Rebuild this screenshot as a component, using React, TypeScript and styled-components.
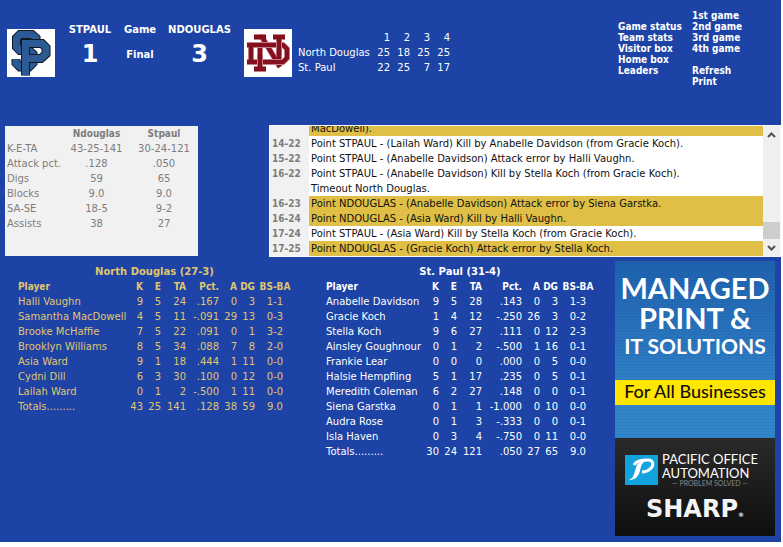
import React from "react";
import styled, { createGlobalStyle } from "styled-components";

const Global = createGlobalStyle`
  * { box-sizing: border-box; }
  html { background: #fff; }
  body { margin: 0; font-family: "DejaVu Sans", Verdana, sans-serif; font-size: 11px; line-height: 15px; color: #fff; }
  table { border-collapse: collapse; border-spacing: 0; }
  td, th { padding: 0; white-space: nowrap; }
`;

const Page = styled.main`
  margin: 0 2px 5px 0;
  padding-bottom: 6px;
  background: #1c43a5;
  overflow: hidden;
`;

const Header = styled.header`
  display: flex;
  align-items: flex-start;
  height: 125px;
  padding: 10px 41px 0 7px;
`;

const TeamLogo = styled.svg`
  display: block;
  flex: none;
  width: 48px;
  height: 48px;
  margin-top: 19px;
  background: #fff;
`;

const Scoreboard = styled.div`
  display: grid;
  grid-template-columns: 70px 30px 89px;
  justify-items: center;
  align-items: center;
  margin-top: 12px;
  font: bold 10px/15px "DejaVu Sans", sans-serif;
`;

const Score = styled.span`
  font: bold 24px/34px "DejaVu Sans", sans-serif;
`;

const LineScore = styled.table`
  margin: 20px 0 0 6px;
  font-size: 10px;
  th { font-weight: normal; text-align: right; }
  th:first-child { width: 72px; text-align: left; }
  td { width: 20px; text-align: right; }
`;

const Menu = styled.nav`
  display: grid;
  grid-template-columns: 66px 48px;
  column-gap: 8px;
  margin-left: auto;
  a { display: block; height: 11px; color: #fff; text-decoration: none; white-space: nowrap; font: bold 10px/11px "DejaVu Sans Condensed", "DejaVu Sans", sans-serif; }
`;

const MenuColumn = styled.div<{ $top?: boolean }>`
  padding-top: ${(p) => (p.$top ? 11 : 0)}px;
`;

const MenuGap = styled.div`
  height: 11px;
`;

const Panels = styled.section`
  display: flex;
  align-items: flex-start;
  gap: 71px;
  padding: 0 0 0 5px;
`;

const TeamStats = styled.div`
  flex: none;
  width: 193px;
  height: 130px;
  margin-top: 1px;
  background: #f1f1f1;
  color: #7d7d7d;
  font-size: 10px;
  table { width: 100%; table-layout: fixed; }
  th, td { height: 15px; text-align: center; }
  thead th { font: bold 10px/15px "DejaVu Sans Condensed", sans-serif; }
  tbody th { padding-left: 2px; font-weight: normal; text-align: left; }
`;

const Plays = styled.div`
  display: flex;
  flex: 1;
  height: 132px;
  padding: 1px;
  background: #f7f7f7;
`;

const PlayList = styled.div`
  flex: 1;
  display: flex;
  flex-direction: column;
  justify-content: flex-end;
  overflow: hidden;
  background: #fff;
  color: #111;
  font-size: 10px;
`;

const PlayRow = styled.div<{ $gold?: boolean }>`
  flex: none;
  display: grid;
  grid-template-columns: 39px 1fr;
  height: 15px;
  background: ${(p) => (p.$gold ? "#dfbf45" : "#fff")};
  white-space: nowrap;
  b { padding-left: 2px; background: #f1f1f1; color: #7d7d7d; font-family: "DejaVu Sans Condensed", sans-serif; }
  span { padding-left: 2px; }
`;

const ScrollBar = styled.div`
  display: flex;
  flex-direction: column;
  width: 17px;
  background: #f0f0f0;
`;

const ScrollButton = styled.button`
  display: flex;
  align-items: center;
  justify-content: center;
  height: 17px;
  padding: 0;
  border: 0;
  background: transparent;
`;

const Track = styled.div`
  display: flex;
  flex: 1;
  align-items: flex-end;
`;

const Thumb = styled.div`
  width: 17px;
  height: 17px;
  background: #cdcdcd;
`;

const Lower = styled.section`
  display: flex;
  align-items: flex-start;
  margin-top: 4px;
  padding: 0 6px 0 18px;
`;

const BoxScore = styled.table<{ $gold?: boolean; $width: number }>`
  flex: none;
  width: ${(p) => p.$width}px;
  margin: 3px ${(p) => (p.$gold ? 35 : 20)}px 0 0;
  color: ${(p) => (p.$gold ? "#e0c66e" : "#fff")};
  font-size: 10px;
  table-layout: fixed;
  caption { font-weight: bold; line-height: 15px; font-size: 10px; }
  th, td { height: 15px; text-align: right; }
  thead th { font: bold 10px/15px "DejaVu Sans Condensed", sans-serif; }
  tr > :first-child { text-align: left; font-weight: normal; }
  thead tr > :first-child { font-weight: bold; }
  tr > :last-child { padding-left: 4px; text-align: center; }
`;

const Ad = styled.a`
  display: flex;
  flex: none;
  flex-direction: column;
  width: 160px;
  margin-left: auto;
  color: #fff;
  text-decoration: none;
  white-space: nowrap;
`;

const AdTop = styled.div`
  height: 119px;
  padding-top: 12px;
  background: repeating-linear-gradient(0deg, rgba(0, 30, 80, 0.06) 0 1px, transparent 1px 3px), linear-gradient(#1e61ad, #2f7fc5);
  text-align: center;
`;

const AdTitle = styled.div`
  font: bold 29px/30px Lato, sans-serif;
`;

const AdSubtitle = styled.div`
  font: bold 21px/26px Lato, sans-serif;
`;

const AdBand = styled.div`
  height: 25px;
  background: #ffe600;
  color: #111;
  font: 500 18px/23px Lato, sans-serif;
  text-align: center;
`;

const AdSpacer = styled.div`
  height: 33px;
  background: repeating-linear-gradient(0deg, rgba(0, 30, 80, 0.06) 0 1px, transparent 1px 3px), #3184c8;
`;

const AdBottom = styled.div`
  height: 98px;
  padding: 14px 10px 0;
  background: linear-gradient(#2a2a2a, #0e0e0e);
`;

const Pacific = styled.div`
  display: flex;
  align-items: center;
  gap: 4px;
  font: 13px/14px Lato, sans-serif;
  svg { flex: none; width: 33px; height: 30px; }
`;

const Tagline = styled.small`
  display: block;
  color: #858585;
  font: 7px/7px Lato, sans-serif;
  text-align: center;
`;

const Sharp = styled.div`
  margin-top: 9px;
  font: bold 24px/26px "DejaVu Sans", sans-serif;
  color: #f4f4f4;
  text-align: center;
  small { font-size: 6px; }
`;

const stats = [
  ["K-E-TA", "43-25-141", "30-24-121"],
  ["Attack pct.", ".128", ".050"],
  ["Digs", "59", "65"],
  ["Blocks", "9.0", "9.0"],
  ["SA-SE", "18-5", "9-2"],
  ["Assists", "38", "27"],
];

const plays: { score: string; text: string; gold?: boolean }[] = [
  { score: "", text: "MacDowell).", gold: true },
  { score: "14-22", text: "Point STPAUL - (Lailah Ward) Kill by Anabelle Davidson (from Gracie Koch)." },
  { score: "15-22", text: "Point STPAUL - (Anabelle Davidson) Attack error by Halli Vaughn." },
  { score: "16-22", text: "Point STPAUL - (Anabelle Davidson) Kill by Stella Koch (from Gracie Koch)." },
  { score: "", text: "Timeout North Douglas." },
  { score: "16-23", text: "Point NDOUGLAS - (Anabelle Davidson) Attack error by Siena Garstka.", gold: true },
  { score: "16-24", text: "Point NDOUGLAS - (Asia Ward) Kill by Halli Vaughn.", gold: true },
  { score: "17-24", text: "Point STPAUL - (Asia Ward) Kill by Stella Koch (from Gracie Koch)." },
  { score: "17-25", text: "Point NDOUGLAS - (Gracie Koch) Attack error by Stella Koch.", gold: true },
];

const columns = ["Player", "K", "E", "TA", "Pct.", "A", "DG", "BS-BA"];

const north = [
  "Halli Vaughn|9|5|24|.167|0|3|1-1",
  "Samantha MacDowell|4|5|11|-.091|29|13|0-3",
  "Brooke McHaffie|7|5|22|.091|0|1|3-2",
  "Brooklyn Williams|8|5|34|.088|7|8|2-0",
  "Asia Ward|9|1|18|.444|1|11|0-0",
  "Cydni Dill|6|3|30|.100|0|12|0-0",
  "Lailah Ward|0|1|2|-.500|1|11|0-0",
  "Totals.........|43|25|141|.128|38|59|9.0",
];

const paul = [
  "Anabelle Davidson|9|5|28|.143|0|3|1-3",
  "Gracie Koch|1|4|12|-.250|26|3|0-2",
  "Stella Koch|9|6|27|.111|0|12|2-3",
  "Ainsley Goughnour|0|1|2|-.500|1|16|0-1",
  "Frankie Lear|0|0|0|.000|0|5|0-0",
  "Halsie Hempfling|5|1|17|.235|0|5|0-1",
  "Meredith Coleman|6|2|27|.148|0|0|0-1",
  "Siena Garstka|0|1|1|-1.000|0|10|0-0",
  "Audra Rose|0|1|3|-.333|0|0|0-1",
  "Isla Haven|0|3|4|-.750|0|11|0-0",
  "Totals.........|30|24|121|.050|27|65|9.0",
];

function Box({ title, rows, widths, gold }: { title: string; rows: string[]; widths: number[]; gold?: boolean }) {
  return (
    <BoxScore $gold={gold} $width={widths.reduce((a, b) => a + b, 0)}>
      <caption>{title}</caption>
      <colgroup>{widths.map((w, i) => <col key={i} width={w} />)}</colgroup>
      <thead>
        <tr>{columns.map((c) => <th key={c} scope="col">{c}</th>)}</tr>
      </thead>
      <tbody>
        {rows.map((row) => {
          const [name, ...cells] = row.split("|");
          return (
            <tr key={name}>
              <th scope="row">{name}</th>
              {cells.map((c, i) => <td key={i}>{c}</td>)}
            </tr>
          );
        })}
      </tbody>
    </BoxScore>
  );
}

const S_LINE = "M29 11 V9 L25 5.500 H13 L9.500 9 V18 L13 21.500 H22 L26 25 V34 L22 38 H13 L9 34 V30";
const P_LINE = "M18.500 46.500 V14.500 H35 L39 18.500 V25 L34 29.500 H19";

const N_LINES = ["M10 8 H22", "M29 8 H41", "M10 40 H22", "M16 16 V40", "M35 8 V36", "M15 8 H18 L36 38"];
const D_LINE = "M3 16 H39 L43 20 V29 L39 33 H3 M7 16 V33";

export default function App() {
  return (
    <>
      <Global />
      <Page>
        <Header>
          <TeamLogo viewBox="0 0 48 48" role="img" aria-label="St. Paul">
            <g fill="none">
              <path d={S_LINE} stroke="#111820" strokeWidth="9" />
              <path d={S_LINE} stroke="#2c5a94" strokeWidth="7" />
              <path d={P_LINE} stroke="#111820" strokeWidth="9" />
              <path d={P_LINE} stroke="#2c5a94" strokeWidth="7" />
            </g>
          </TeamLogo>
          <Scoreboard>
            <span>STPAUL</span><span>Game</span><span>NDOUGLAS</span>
            <Score>1</Score><span>Final</span><Score>3</Score>
          </Scoreboard>
          <TeamLogo viewBox="0 0 48 48" role="img" aria-label="North Douglas">
            <g fill="none">
              {N_LINES.map((d) => <path key={d} d={d} stroke="#d3a9ad" strokeWidth="6" />)}
              {N_LINES.map((d) => <path key={d} d={d} stroke="#850f1c" strokeWidth="4.500" />)}
              <path d={D_LINE} stroke="#d3a9ad" strokeWidth="6" />
              <path d={D_LINE} stroke="#850f1c" strokeWidth="4.500" />
              <path d="M35 12 V20" stroke="#d3a9ad" strokeWidth="6" />
              <path d="M35 8 V26" stroke="#850f1c" strokeWidth="4.500" />
              <path d="M16 30 V37" stroke="#d3a9ad" strokeWidth="6" />
              <path d="M16 26 V40" stroke="#850f1c" strokeWidth="4.500" />
            </g>
          </TeamLogo>
          <LineScore>
            <thead><tr><th /><th>1</th><th>2</th><th>3</th><th>4</th></tr></thead>
            <tbody>
              <tr><th scope="row">North Douglas</th><td>25</td><td>18</td><td>25</td><td>25</td></tr>
              <tr><th scope="row">St. Paul</th><td>22</td><td>25</td><td>7</td><td>17</td></tr>
            </tbody>
          </LineScore>
          <Menu>
            <MenuColumn $top>
              {["Game status", "Team stats", "Visitor box", "Home box", "Leaders"].map((t) => <a key={t} href="#">{t}</a>)}
            </MenuColumn>
            <MenuColumn>
              {["1st game", "2nd game", "3rd game", "4th game"].map((t) => <a key={t} href="#">{t}</a>)}
              <MenuGap />
              <a href="#">Refresh</a>
              <a href="#">Print</a>
            </MenuColumn>
          </Menu>
        </Header>

        <Panels>
          <TeamStats>
            <table>
              <colgroup><col width="58" /><col width="67" /><col width="68" /></colgroup>
              <thead><tr><th /><th scope="col">Ndouglas</th><th scope="col">Stpaul</th></tr></thead>
              <tbody>
                {stats.map(([k, a, b]) => <tr key={k}><th scope="row">{k}</th><td>{a}</td><td>{b}</td></tr>)}
              </tbody>
            </table>
          </TeamStats>
          <Plays>
            <PlayList>
              {plays.map((p, i) => <PlayRow key={i} $gold={p.gold}><b>{p.score}</b><span>{p.text}</span></PlayRow>)}
            </PlayList>
            <ScrollBar>
              <ScrollButton aria-label="Scroll up">
                <svg width="9" height="6" viewBox="0 0 9 6"><path d="M1 5 L4.500 1.500 L8 5" fill="none" stroke="#505050" strokeWidth="2" /></svg>
              </ScrollButton>
              <Track><Thumb /></Track>
              <ScrollButton aria-label="Scroll down">
                <svg width="9" height="6" viewBox="0 0 9 6"><path d="M1 1 L4.500 4.500 L8 1" fill="none" stroke="#505050" strokeWidth="2" /></svg>
              </ScrollButton>
            </ScrollBar>
          </Plays>
        </Panels>

        <Lower>
          <Box title="North Douglas (27-3)" rows={north} gold widths={[111, 14, 18, 25, 33, 18, 18, 36]} />
          <Box title="St. Paul (31-4)" rows={paul} widths={[99, 14, 18, 25, 40, 18, 18, 36]} />
          <Ad href="#">
            <AdTop>
              <AdTitle>MANAGED<br />PRINT &amp;</AdTitle>
              <AdSubtitle>IT SOLUTIONS</AdSubtitle>
            </AdTop>
            <AdBand>For All Businesses</AdBand>
            <AdSpacer />
            <AdBottom>
              <Pacific>
                <svg viewBox="0 0 33 30" aria-hidden="true">
                  <path fill="#12a3dd" d="M0 0h33v30H0z" />
                  <path fill="#fff" d="M4 25 C9 23 9 18 11 13 C12 9 14 7 18 6 L20 6 C16 9 16 12 15 16 C13 23 9 25 4 25z" />
                  <path fill="none" stroke="#fff" strokeWidth="3" d="M9 10 C12 5 18 5 23 5 C29 5 29 11 25 14 C23 16 20 17 17 17" />
                </svg>
                <div>PACIFIC OFFICE<br />AUTOMATION<Tagline>— PROBLEM SOLVED —</Tagline></div>
              </Pacific>
              <Sharp>SHARP<small>®</small></Sharp>
            </AdBottom>
          </Ad>
        </Lower>
      </Page>
    </>
  );
}
